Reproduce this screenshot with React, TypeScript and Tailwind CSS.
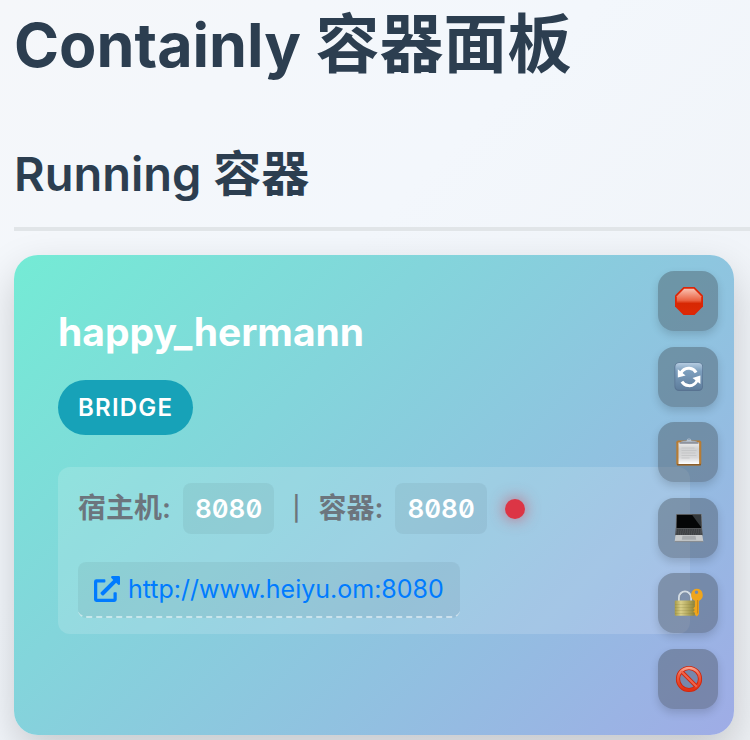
import type { ReactNode } from "react";
import { FaExternalLinkAlt } from "react-icons/fa";

function StopIcon() {
  return (
    <svg viewBox="0 0 30 30" className="size-[30px]" aria-hidden="true">
      <defs>
        <linearGradient id="stopFill" x1="0" y1="0" x2="0" y2="1">
          <stop offset="0" stopColor="#f9c0b0" />
          <stop offset="0.48" stopColor="#ea6040" />
          <stop offset="0.6" stopColor="#d72703" />
          <stop offset="1" stopColor="#dc2a06" />
        </linearGradient>
      </defs>
      <path d="M9.500 1h11L29 9.500v11L20.500 29h-11L1 20.500v-11z" fill="#dd2506" />
      <path d="M10.200 2.800h9.600l7.400 7.400v9.600l-7.400 7.400h-9.600l-7.400-7.400v-9.600z" fill="url(#stopFill)" />
    </svg>
  );
}

function RestartIcon() {
  return (
    <svg viewBox="0 0 30 30" className="size-[30px]" aria-hidden="true">
      <defs>
        <linearGradient id="restartFill" x1="0" y1="0" x2="0" y2="1">
          <stop offset="0" stopColor="#b4cbe0" />
          <stop offset="0.3" stopColor="#7d9fbe" />
          <stop offset="1" stopColor="#5e7d9c" />
        </linearGradient>
      </defs>
      <rect x="0.500" y="0.500" width="28.500" height="28.500" rx="4.500" fill="#587391" />
      <rect x="1.300" y="1.100" width="27" height="26.600" rx="4" fill="url(#restartFill)" />
      <g fill="none" stroke="#fff" strokeWidth="3">
        <path d="M6.600 11.500C8.600 7.500 12 5.800 15.500 6.200c2.900.3 5.200 1.800 6.600 4.300" />
        <path d="M23.400 18c-1.900 4.200-5.400 6.100-9.200 5.600-2.800-.3-4.900-1.700-6.300-4" />
      </g>
      <path d="M3.800 7.200v8.400l7.800-2.200zM26.400 22v-8.400l-7.900 2.300z" fill="#fff" />
    </svg>
  );
}

function ClipboardIcon() {
  return (
    <svg viewBox="0 0 30 30" className="size-[30px]" aria-hidden="true">
      <defs>
        <linearGradient id="paperFill" x1="0" y1="0" x2="0" y2="1">
          <stop offset="0" stopColor="#ededed" />
          <stop offset="0.3" stopColor="#d0d1d2" />
          <stop offset="0.7" stopColor="#d8d8d9" />
          <stop offset="1" stopColor="#fff" />
        </linearGradient>
      </defs>
      <rect x="2.300" y="3.500" width="25" height="25" rx="1.800" fill="#b67c35" />
      <path d="M3 27.600h24" stroke="#8b5d29" strokeWidth="1.500" />
      <rect x="4.500" y="5.500" width="20.600" height="21.500" fill="url(#paperFill)" />
      <path d="M7.500 11h13M7.500 13.500h15M7.500 16h14M7.500 18.500h15M7.500 21h8" stroke="#bfc0c2" strokeWidth=".7" />
      <path d="M5.500 6.500c.5-2 2.500-2.500 6-2.700h7c3.500.2 5.500.7 6 2.700z" fill="#a5adb8" />
      <path d="M5.500 6h19" stroke="#777b85" />
      <path d="M11.500 4.500c1-.4 1.500-1 1.600-1.700a2 2 0 0 1 3.800 0c.1.700.6 1.300 1.600 1.700z" fill="#b5c2cf" />
      <circle cx="15" cy="2.400" r=".7" fill="#7894ac" />
    </svg>
  );
}

function LaptopIcon() {
  return (
    <svg viewBox="0 0 30 30" className="size-[30px]" aria-hidden="true">
      <path d="M2 1h25.800l.3 15H1.700z" fill="#74777a" />
      <path d="M2.800 1.800h24.200l.3 13.400H2.500z" fill="#050607" />
      <path d="M18 1.800h9l.2 12.400z" fill="#34383b" />
      <path d="M1.700 15.500h26.300l.9 7H1z" fill="#54575a" />
      <path d="M3 17h24M2.700 19h24.600M2.300 21h25.400" stroke="#292c2e" strokeWidth="1.200" strokeDasharray="1.600 .6" />
      <path d="M1.500 22h26.800l1 6.500H.7z" fill="#c7c9ca" />
      <path d="M8.500 22.800h13l.7 4H7.800z" fill="#a9acaf" />
      <path d="M.7 28.500h28.600" stroke="#888d93" strokeWidth="1.200" />
    </svg>
  );
}

function LockKeyIcon() {
  return (
    <svg viewBox="0 0 30 30" className="size-[30px]" aria-hidden="true">
      <defs>
        <linearGradient id="lockFill" x1="0" y1="0" x2="1" y2="0">
          <stop offset="0" stopColor="#a79a48" />
          <stop offset="0.3" stopColor="#d9cf88" />
          <stop offset="1" stopColor="#8f8437" />
        </linearGradient>
      </defs>
      <path d="M5 14V9.500a6 6 0 0 1 12 0V14" fill="none" stroke="#d3dce3" strokeWidth="2" />
      <path d="M6.200 14V9.700a4.800 4.800 0 0 1 9.600 0V14" fill="none" stroke="#7e8b98" strokeWidth=".6" />
      <rect x="0.800" y="12.600" width="20" height="15.200" rx="1" fill="url(#lockFill)" />
      <path d="M1 16.500h19.600M1 19.500h19.600M1 22.500h19.600M1 25.500h19.600" stroke="#827a38" strokeWidth=".4" opacity=".5" />
      <path
        fillRule="evenodd"
        d="M22.500.8a6.300 6.300 0 0 1 2.400 12.100V26l-2 2.500-2-1.800v-2l-1.700-1 1.700-1.700-1.700-1.500 1.700-1.700v-6A6.300 6.300 0 0 1 22.500.8zm0 1.700a1.700 1.700 0 1 0 0 3.400 1.700 1.700 0 0 0 0-3.400z"
        fill="#efa51c"
      />
      <path d="M23.600 12v13.500" stroke="#c87d0c" strokeWidth=".8" />
    </svg>
  );
}

function ForbiddenIcon() {
  return (
    <svg viewBox="0 0 30 30" className="size-[30px]" aria-hidden="true">
      <defs>
        <linearGradient id="banStroke" x1="0" y1="0" x2="0" y2="1">
          <stop offset="0" stopColor="#f9a18e" />
          <stop offset="0.35" stopColor="#ef5c40" />
          <stop offset="1" stopColor="#e22f12" />
        </linearGradient>
      </defs>
      <g fill="none">
        <circle cx="15" cy="15" r="11" stroke="#d22408" strokeWidth="4.200" />
        <path d="M7.200 7.200l15.600 15.600" stroke="#d22408" strokeWidth="4" />
        <circle cx="15" cy="15" r="11" stroke="url(#banStroke)" strokeWidth="2.400" />
        <path d="M7.200 7.200l15.600 15.600" stroke="#ef634a" strokeWidth="2.200" />
      </g>
    </svg>
  );
}

const actions: { label: string; icon: ReactNode }[] = [
  { label: "停止", icon: <StopIcon /> },
  { label: "重启", icon: <RestartIcon /> },
  { label: "日志", icon: <ClipboardIcon /> },
  { label: "终端", icon: <LaptopIcon /> },
  { label: "权限", icon: <LockKeyIcon /> },
  { label: "禁用", icon: <ForbiddenIcon /> },
];

function Port({ value }: { value: string }) {
  return (
    <code className="rounded-lg bg-black/5 px-3 font-['Inter',monospace] text-[26px] leading-[51px] font-semibold text-white slashed-zero tabular-nums">
      {value}
    </code>
  );
}

function ContainerCard() {
  return (
    <article className="relative mt-6 mr-4 min-h-[480px] rounded-3xl bg-linear-[135deg,#74ebd5,#9face6] px-11 pt-[53px] pb-[101px] shadow-[0_16px_40px_rgba(0,0,0,0.18)]">
      <h3 className="text-[39px] leading-[48px] font-bold text-white">happy_hermann</h3>
      <span className="mt-6 inline-block rounded-full bg-[#17a2b8] px-5 align-top text-2xl leading-[55px] font-semibold tracking-wider text-white">
        BRIDGE
      </span>
      <div className="mt-8 flex flex-col items-start gap-7 rounded-xl bg-white/15 px-5 py-4">
        <div className="flex items-center text-[28px] leading-[51px] font-semibold text-[#6c757d]">
          <span className="mr-3">宿主机:</span>
          <Port value="8080" />
          <span className="mx-[18px] text-2xl font-medium">|</span>
          <span className="mr-3">容器:</span>
          <Port value="8080" />
          <span className="ml-[18px] size-5 rounded-full bg-[#dc3545] shadow-[0_0_16px_rgba(220,53,69,0.7)]" />
        </div>
        <a
          href="http://www.heiyu.om:8080"
          className="flex items-center gap-2 rounded-lg border-b-2 border-dashed border-white/50 bg-black/5 px-4 text-[25px] leading-[54px] text-[#007bff]"
        >
          <FaExternalLinkAlt className="size-[26px]" />
          http://www.heiyu.om:8080
        </a>
      </div>
      <div className="absolute top-4 right-4 bottom-[26px] flex flex-col justify-between">
        {actions.map((action) => (
          <button
            key={action.label}
            type="button"
            aria-label={action.label}
            className="flex size-[60px] items-center justify-center rounded-2xl bg-[#343a40]/35 pl-0.5 shadow-[0_4px_8px_rgba(0,0,0,0.15)]"
          >
            {action.icon}
          </button>
        ))}
      </div>
    </article>
  );
}

export default function App() {
  return (
    <main className="min-h-screen overflow-hidden bg-linear-[135deg,#f5f7fa,#f3f7fc_40%,#eef1f5] pt-[5px] pb-[5px] pl-[14px] font-['Inter','Noto_Sans_CJK_SC',sans-serif] text-[#2c3e50]">
      <h1 className="text-[64px] leading-[77px] font-bold">
        <span className="text-[61px]">Containly </span>容器面板
      </h1>
      <h2 className="mt-[61px] border-b-4 border-[#e1e5e8] pb-6 text-5xl leading-[58px] font-semibold">
        <span className="text-[47px]">Running </span>容器
      </h2>
      <ContainerCard />
    </main>
  );
}
